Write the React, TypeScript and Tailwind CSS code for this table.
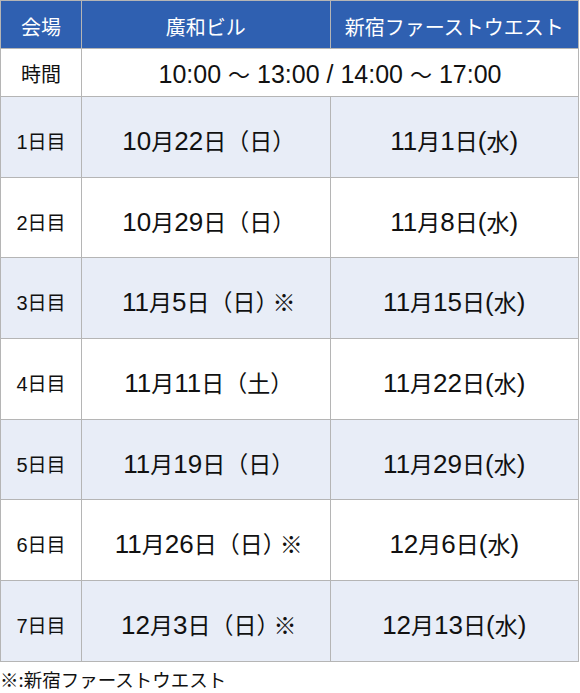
import React from "react";

const rows: { label: string; a: string; b: string }[] = [
  { label: "1日目", a: "10月22日（日）", b: "11月1日(水)" },
  { label: "2日目", a: "10月29日（日）", b: "11月8日(水)" },
  { label: "3日目", a: "11月5日（日）※", b: "11月15日(水)" },
  { label: "4日目", a: "11月11日（土）", b: "11月22日(水)" },
  { label: "5日目", a: "11月19日（日）", b: "11月29日(水)" },
  { label: "6日目", a: "11月26日（日）※", b: "12月6日(水)" },
  { label: "7日目", a: "12月3日（日）※", b: "12月13日(水)" },
];

const LATIN = { fontFamily: '"Liberation Sans", Arial, sans-serif' };

function Mix({ text, latin, cjk }: { text: string; latin: string; cjk: string }) {
  const parts = text.split(/([0-9:\/() ]+|）(?=※))/).filter((p) => p && p.length > 0);
  return (
    <>
      {parts.map((p, i) =>
        /^[0-9:\/() ]+$/.test(p) ? (
          <span key={i} className={latin} style={LATIN}>
            {p}
          </span>
        ) : p === "）" ? (
          <span key={i} className={`${cjk} tracking-[-6px]`}>
            {p}
          </span>
        ) : (
          <span key={i} className={cjk}>
            {p}
          </span>
        )
      )}
    </>
  );
}

export default function App() {
  return (
    <div
      className="bg-white text-[#111]"
      style={{ fontFamily: '"Noto Sans CJK JP", "Noto Sans", sans-serif' }}
    >
      <table className="w-[579px] border-collapse table-fixed">
        <colgroup>
          <col className="w-[81px]" />
          <col />
          <col />
        </colgroup>
        <thead>
          <tr className="h-[48px] bg-[#2f60b1] text-white text-[20px]">
            <th className="border border-[#b5b5b5] font-normal pt-[5px]">会場</th>
            <th className="border border-[#b5b5b5] font-normal pt-[5px]">廣和ビル</th>
            <th className="border border-[#b5b5b5] font-normal pt-[5px]">新宿ファーストウエスト</th>
          </tr>
        </thead>
        <tbody>
          <tr className="h-[48px] bg-white">
            <td className="border border-[#b5b5b5] text-center text-[20px] leading-[28px] pt-[3px]">時間</td>
            <td colSpan={2} className="border border-[#b5b5b5] text-center leading-[28px] pt-[3px]">
              <Mix
                text="10:00 ～ 13:00 / 14:00 ～ 17:00"
                latin="text-[25px]"
                cjk="text-[22px]"
              />
            </td>
          </tr>
          {rows.map((r, i) => (
            <tr
              key={r.label}
              className={`h-[80.7px] ${i % 2 === 0 ? "bg-[#e8edf7]" : "bg-white"}`}
            >
              <td className="border border-[#b5b5b5] text-center leading-[28px] pt-[9px]">
                <Mix text={r.label} latin="text-[20px]" cjk="text-[19px]" />
              </td>
              <td className="border border-[#b5b5b5] text-center leading-[30px] pt-[9px] pl-[6px]">
                <Mix text={r.a} latin="text-[26px]" cjk="text-[23px]" />
              </td>
              <td className="border border-[#b5b5b5] text-center leading-[30px] pt-[9px]">
                <Mix text={r.b} latin="text-[26px]" cjk="text-[23px]" />
              </td>
            </tr>
          ))}
        </tbody>
      </table>
      <div className="mt-[5px] text-[18.5px] leading-[24px]">※:新宿ファーストウエスト</div>
    </div>
  );
}
